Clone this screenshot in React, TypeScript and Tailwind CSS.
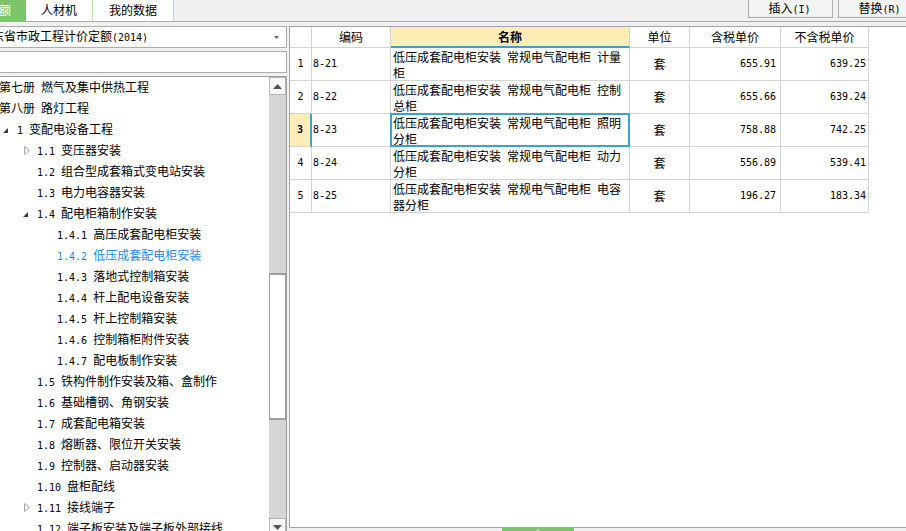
import React from "react";

function T({ s }: { s: string }) {
  const parts = s.split(/([\x20-\x7e]+)/);
  return (
    <>
      {parts.map((p, i) =>
        p === "" ? null : /^[\x20-\x7e]+$/.test(p) ? (
          <span key={i} className="font-['DejaVu_Sans_Mono',monospace] text-[10px] whitespace-pre">
            {p}
          </span>
        ) : (
          <span key={i}>{p}</span>
        )
      )}
    </>
  );
}

type TreeItem = { level: number; icon?: "open" | "closed"; text: string; sel?: boolean };

const tree: TreeItem[] = [
  { level: 0, text: "第七册 燃气及集中供热工程" },
  { level: 0, text: "第八册 路灯工程" },
  { level: 1, icon: "open", text: "1 变配电设备工程" },
  { level: 2, icon: "closed", text: "1.1 变压器安装" },
  { level: 2, text: "1.2 组合型成套箱式变电站安装" },
  { level: 2, text: "1.3 电力电容器安装" },
  { level: 2, icon: "open", text: "1.4 配电柜箱制作安装" },
  { level: 3, text: "1.4.1 高压成套配电柜安装" },
  { level: 3, text: "1.4.2 低压成套配电柜安装", sel: true },
  { level: 3, text: "1.4.3 落地式控制箱安装" },
  { level: 3, text: "1.4.4 杆上配电设备安装" },
  { level: 3, text: "1.4.5 杆上控制箱安装" },
  { level: 3, text: "1.4.6 控制箱柜附件安装" },
  { level: 3, text: "1.4.7 配电板制作安装" },
  { level: 2, text: "1.5 铁构件制作安装及箱、盒制作" },
  { level: 2, text: "1.6 基础槽钢、角钢安装" },
  { level: 2, text: "1.7 成套配电箱安装" },
  { level: 2, text: "1.8 熔断器、限位开关安装" },
  { level: 2, text: "1.9 控制器、启动器安装" },
  { level: 2, text: "1.10 盘柜配线" },
  { level: 2, icon: "closed", text: "1.11 接线端子" },
  { level: 2, text: "1.12 端子板安装及端子板外部接线" },
];

const rows = [
  { n: "1", code: "8-21", l1: "低压成套配电柜安装 常规电气配电柜 计量", l2: "柜", a: "655.91", b: "639.25" },
  { n: "2", code: "8-22", l1: "低压成套配电柜安装 常规电气配电柜 控制", l2: "总柜", a: "655.66", b: "639.24" },
  { n: "3", code: "8-23", l1: "低压成套配电柜安装 常规电气配电柜 照明", l2: "分柜", a: "758.88", b: "742.25", sel: true },
  { n: "4", code: "8-24", l1: "低压成套配电柜安装 常规电气配电柜 动力", l2: "分柜", a: "556.89", b: "539.41" },
  { n: "5", code: "8-25", l1: "低压成套配电柜安装 常规电气配电柜 电容", l2: "器分柜", a: "196.27", b: "183.34" },
];

const indent: Record<number, string> = {
  1: "pl-[3px]",
  2: "pl-[23px]",
  3: "pl-[43px]",
};

function TreeRow({ item }: { item: TreeItem }) {
  const color = item.sel ? "text-[#1a8cf0]" : "text-black";
  if (item.level === 0) {
    return (
      <div className={`h-[21px] shrink-0 flex items-center whitespace-nowrap leading-[14px] ${color}`}>
        <span className="-ml-[1px]">
          <T s={item.text} />
        </span>
      </div>
    );
  }
  return (
    <div className={`h-[21px] shrink-0 flex items-center whitespace-nowrap leading-[14px] ${indent[item.level]} ${color}`}>
      <div className="w-[14px] h-[21px] flex items-center shrink-0">
        {item.icon === "open" && (
          <svg width="5" height="5" viewBox="0 0 5 5" className="mt-[1px]">
            <polygon points="5,0 5,5 0,5" fill="#3c3c3c" />
          </svg>
        )}
        {item.icon === "closed" && (
          <svg width="7" height="9" viewBox="0 0 7 9" className="ml-[1px]">
            <polygon points="0.5,0.5 5.5,4.5 0.5,8.5" fill="white" stroke="#a6a6a6" strokeWidth="1" />
          </svg>
        )}
      </div>
      <span>
        <T s={item.text} />
      </span>
    </div>
  );
}

const cellBase = "border-r border-b border-[#d5d5d5] shrink-0";

export default function App() {
  return (
    <div className="w-[906px] h-[531px] overflow-hidden bg-[#f0f0f0] text-[12px] text-black font-['Noto_Sans_CJK_SC',sans-serif] flex flex-col">
      {/* top bar */}
      <div className="h-[22px] shrink-0 flex border-b border-[#86c975] overflow-hidden">
        <div className="w-[26px] bg-[#7cc46b] text-white flex items-center overflow-hidden pb-[1px]">
          <span className="-ml-[1px] leading-[14px]">额</span>
        </div>
        <div className="w-[67px] bg-white border-r border-[#b9dfae] flex items-center justify-center pb-[1px] leading-[14px]">
          人材机
        </div>
        <div className="w-[81px] bg-white border-r border-[#b9dfae] flex items-center justify-center pb-[1px] leading-[14px]">
          我的数据
        </div>
        <div className="flex-1" />
        <div className="flex gap-[5px] -mr-[17px] -mt-[1px]">
          <div className="w-[85px] h-[19px] border border-[#adadad] bg-[#f4f4f4] flex items-center justify-center pt-[1px] leading-[14px]">
            <span className="ml-[-2px]">
              <T s="插入(I)" />
            </span>
          </div>
          <div className="w-[85px] h-[19px] border border-[#adadad] bg-[#f4f4f4] flex items-center justify-center pt-[1px] leading-[14px]">
            <span className="ml-[-2px]">
              <T s="替换(R)" />
            </span>
          </div>
        </div>
      </div>

      {/* main */}
      <div className="flex-1 flex pt-[4px] gap-[2px] min-h-0">
        {/* left column */}
        <div className="w-[287px] shrink-0 flex flex-col gap-[3px]">
          <div className="h-[22px] shrink-0 bg-white border border-l-0 border-[#abadb3] flex items-center justify-between pr-[7px] overflow-hidden">
            <span className="-ml-[8px] whitespace-nowrap leading-[14px]">
              <T s="东省市政工程计价定额(2014)" />
            </span>
            <svg width="5" height="3" viewBox="0 0 5 3" className="mt-[1px]">
              <polygon points="0,0 5,0 2.5,3" fill="#6d6d6d" />
            </svg>
          </div>
          <div className="h-[22px] shrink-0 bg-white border border-l-0 border-[#abadb3]" />
          <div className="flex-1 min-h-0 bg-white border-t border-r border-[#a0a0a0] flex overflow-hidden">
            <div className="flex-1 flex flex-col overflow-hidden">
              {tree.map((it, i) => (
                <TreeRow key={i} item={it} />
              ))}
            </div>
            <div className="w-[17px] shrink-0 bg-[#d6d6d6] flex flex-col">
              <div className="h-[18px] shrink-0 bg-[#f7f7f7] border border-[#b4b4b4] flex items-center justify-center">
                <svg width="9" height="5" viewBox="0 0 9 5">
                  <polygon points="0,5 9,5 4.5,0" fill="#555" />
                </svg>
              </div>
              <div className="h-[178px] shrink-0" />
              <div className="h-[147px] shrink-0 bg-white border border-[#9e9e9e] border-t-2 border-b-2" />
              <div className="h-[98px] shrink-0" />
              <div className="h-[18px] shrink-0 bg-[#f7f7f7] border border-[#b4b4b4] flex items-center justify-center">
                <svg width="9" height="5" viewBox="0 0 9 5">
                  <polygon points="0,0 9,0 4.5,5" fill="#555" />
                </svg>
              </div>
            </div>
          </div>
        </div>

        {/* right column */}
        <div className="w-[620px] shrink-0 flex flex-col">
          <div className="h-[502px] shrink-0 bg-white border-t border-l border-b border-[#a0a4a8] flex flex-col">
            {/* header */}
            <div className="flex h-[21px] shrink-0 leading-[14px]">
              <div className={`${cellBase} w-[22px]`} />
              <div className={`${cellBase} w-[79px] flex items-center justify-center`}>编码</div>
              <div className="w-[239px] shrink-0 border-r border-[#d5d5d5] border-b-2 border-b-[#3aa1d3] bg-[#fdecb4] flex items-center justify-center font-bold">
                名称
              </div>
              <div className={`${cellBase} w-[60px] flex items-center justify-center`}>单位</div>
              <div className={`${cellBase} w-[91px] flex items-center justify-center`}>含税单价</div>
              <div className={`${cellBase} w-[88px] flex items-center justify-center`}>不含税单价</div>
            </div>
            {rows.map((r) => (
              <div key={r.n} className="flex h-[33px] shrink-0 leading-[14px]">
                <div
                  className={
                    r.sel
                      ? "w-[22px] shrink-0 border-b border-[#d5d5d5] border-r-2 border-r-[#3aa1d3] bg-[#fdecb4] flex items-center justify-center font-bold"
                      : `${cellBase} w-[22px] flex items-center justify-center`
                  }
                >
                  <T s={r.n} />
                </div>
                <div className={`${cellBase} w-[79px] flex items-center pl-[1px]`}>
                  <T s={r.code} />
                </div>
                <div className={`${cellBase} w-[239px] relative flex flex-col justify-center pl-[2px] pt-[2px] whitespace-nowrap`}>
                  <div>
                    <T s={r.l1} />
                  </div>
                  <div>
                    <T s={r.l2} />
                  </div>
                  {r.sel && <div className="absolute -inset-[1px] border-2 border-[#3aa1d3]" />}
                </div>
                <div className={`${cellBase} w-[60px] flex items-center justify-center`}>套</div>
                <div className={`${cellBase} w-[91px] flex items-center justify-end pr-[4px]`}>
                  <T s={r.a} />
                </div>
                <div className={`${cellBase} w-[88px] flex items-center justify-end pr-[2px]`}>
                  <T s={r.b} />
                </div>
              </div>
            ))}
          </div>
          <div className="h-[8px] shrink-0 pl-[213px]">
            <div className="w-[72px] h-[8px] bg-[#7cc46b] flex justify-center">
              <svg width="8" height="5" viewBox="0 0 8 5">
                <polygon points="0,5 8,5 4,0.5" fill="#b7e0ab" />
              </svg>
            </div>
          </div>
        </div>
      </div>
    </div>
  );
}
